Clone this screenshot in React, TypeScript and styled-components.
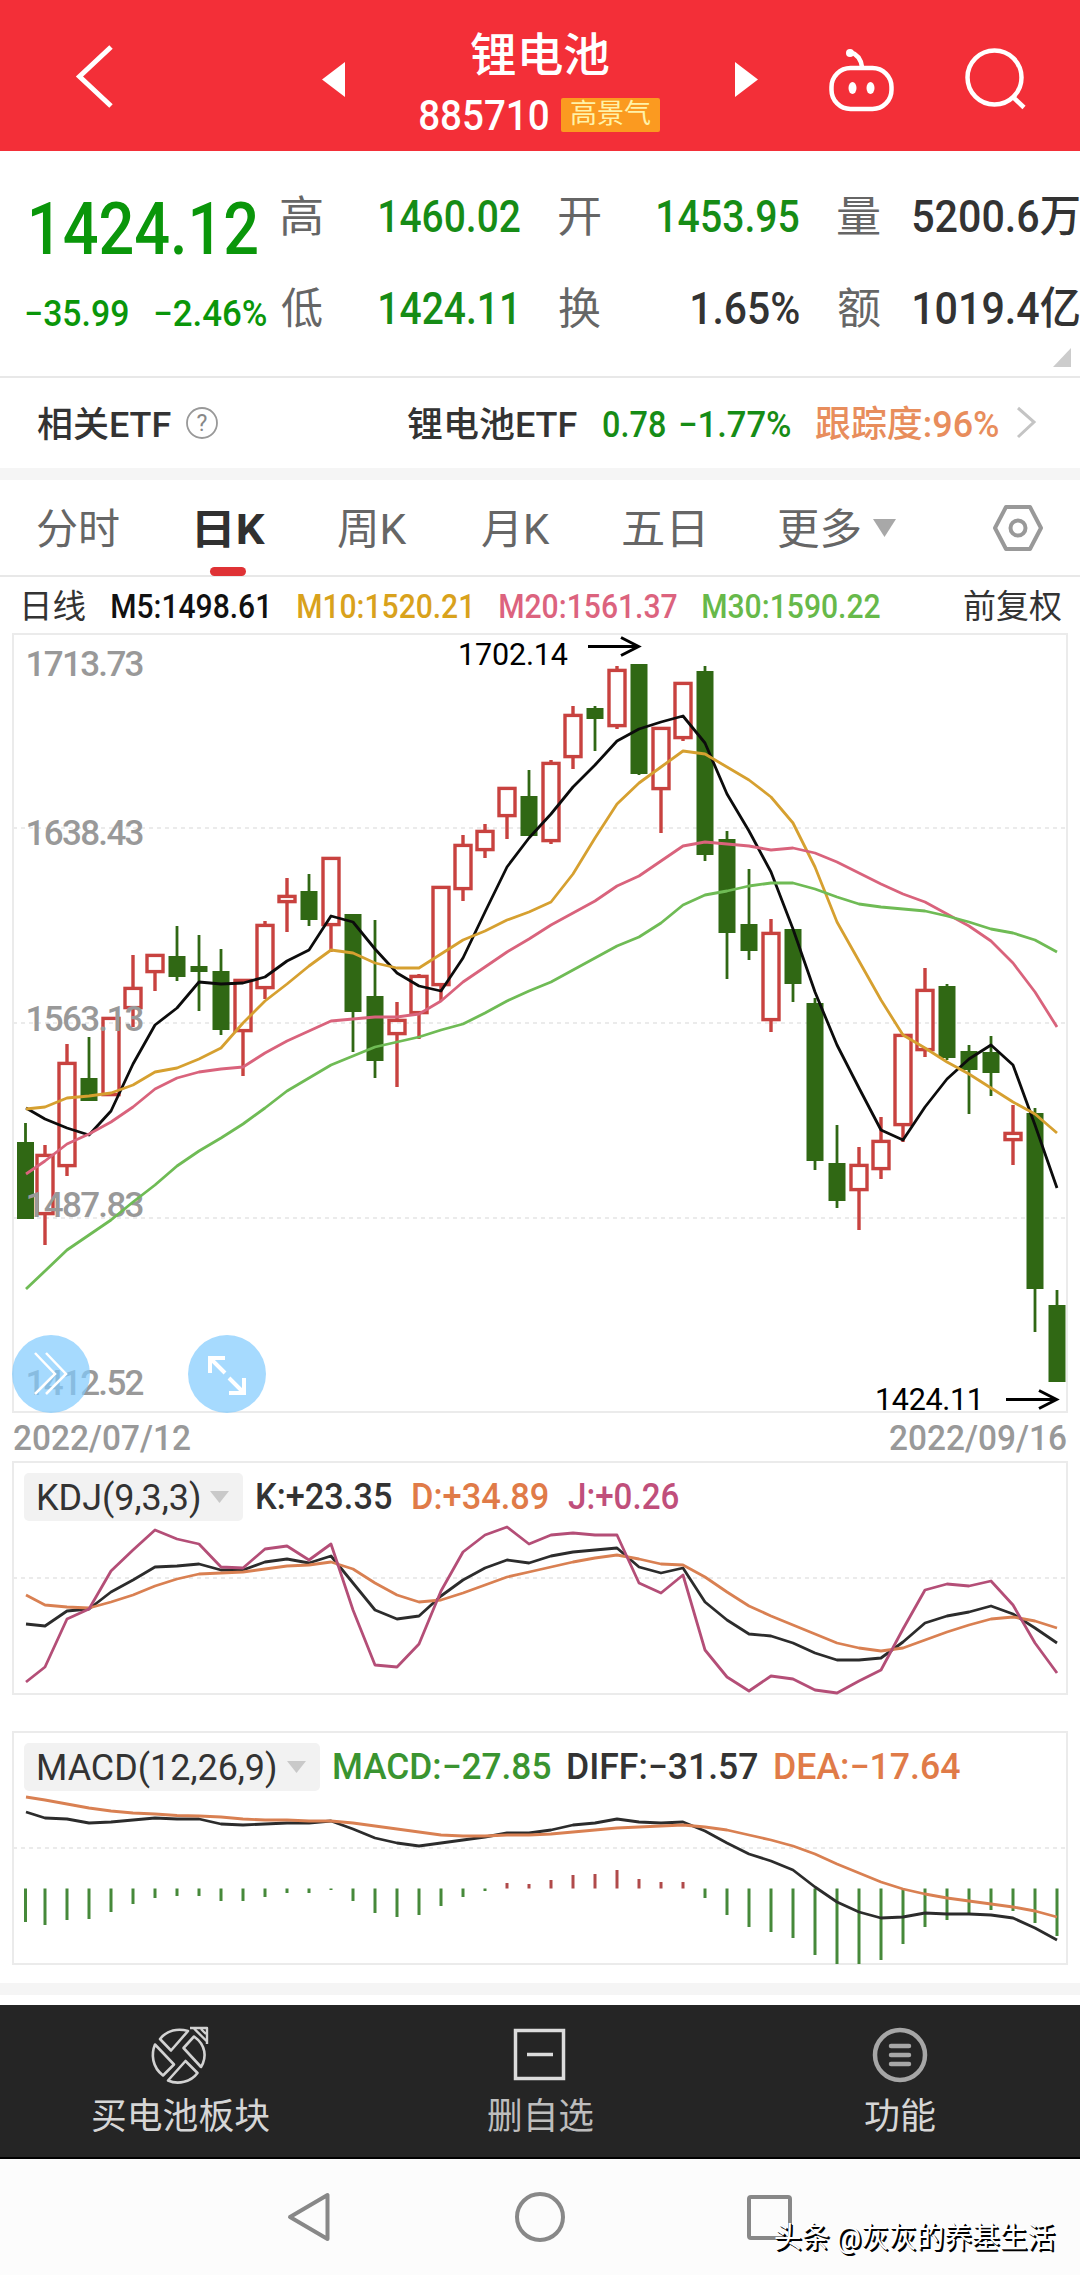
import React, { useLayoutEffect, useRef } from "react";
import styled, { createGlobalStyle } from "styled-components";

const FONT = `Roboto, "Noto Sans CJK SC", sans-serif`;

const Global = createGlobalStyle`
  * { box-sizing: border-box; }
  html, body { margin: 0; padding: 0; background: #fff; }
  body { font-family: ${FONT}; color: #333; width: 1080px; }
  svg { display: block; flex: none; overflow: visible; }
`;

/* ---------- text fitted to a fixed ink width ---------- */

const FitBox = styled.span<{ $w: number; $size: number; $ml: number; $mr: number; $color?: string; $weight: number; $dy: number; $shadow?: string }>`
  display: block;
  flex: none;
  width: ${(p) => p.$w}px;
  height: ${(p) => p.$size}px;
  margin-left: ${(p) => p.$ml}px;
  margin-right: ${(p) => p.$mr}px;
  margin-top: ${(p) => p.$dy}px;
  font-size: ${(p) => p.$size}px;
  font-weight: ${(p) => p.$weight};
  line-height: 1;
  white-space: nowrap;
  color: ${(p) => p.$color || "inherit"};
  text-shadow: ${(p) => p.$shadow || "none"};
`;
const FitInner = styled.span`
  display: inline-block;
  transform-origin: 0 50%;
`;

interface FitProps {
  children: string;
  w: number;
  size: number;
  ml?: number;
  mr?: number;
  dy?: number;
  color?: string;
  weight?: number;
  shadow?: string;
}

function Fit({ children, w, size, ml = 0, mr = 0, dy = 0, color, weight = 500, shadow }: FitProps) {
  const ref = useRef<HTMLSpanElement>(null);
  useLayoutEffect(() => {
    const ctx = document.createElement("canvas").getContext("2d");
    if (!ctx || !ref.current) return;
    ctx.font = `${weight} ${size}px ${FONT}`;
    const m = ctx.measureText(children);
    const scale = w / (m.actualBoundingBoxLeft + m.actualBoundingBoxRight);
    ref.current.style.transform = `translateX(${m.actualBoundingBoxLeft * scale}px) scaleX(${scale})`;
  });
  return (
    <FitBox $w={w} $size={size} $ml={ml} $mr={mr} $dy={dy} $color={color} $weight={weight} $shadow={shadow}>
      <FitInner ref={ref}>{children}</FitInner>
    </FitBox>
  );
}

/* ---------- header ---------- */

const Header = styled.header`
  display: flex;
  align-items: flex-start;
  height: 151px;
  background: #f32f38;
  color: #fff;
`;
const HeaderIcon = styled.div<{ $w: number }>`
  width: ${(p) => p.$w}px;
  height: 151px;
  flex: none;
`;
const TitleBlock = styled.div`
  width: 390px;
  height: 151px;
  display: flex;
  flex-direction: column;
  align-items: center;
  padding-top: 32px;
`;
const CodeRow = styled.div`
  display: flex;
  align-items: center;
  margin-top: 17px;
`;
const Badge = styled.div`
  display: flex;
  align-items: center;
  width: 99px;
  height: 34px;
  margin: -3px 0 0 13px;
  background: #fb9a20;
  border-radius: 2px;
`;

/* ---------- quote ---------- */

const Quote = styled.section`
  display: flex;
  height: 227px;
  border-bottom: 2px solid #e8e8e8;
`;
const PriceCol = styled.div`
  width: 281px;
  padding-top: 42px;
  color: #0a960a;
`;
const Row = styled.div<{ $mt?: number; $h?: number; $pl?: number }>`
  display: flex;
  align-items: center;
  margin-top: ${(p) => p.$mt || 0}px;
  padding-left: ${(p) => p.$pl || 0}px;
  height: ${(p) => (p.$h ? p.$h + "px" : "auto")};
`;
const Stats = styled.div`
  display: grid;
  grid-template-columns: 239px 240px 241px;
  grid-template-rows: 92px 92px;
  column-gap: 39px;
  padding-top: 20px;
`;
const Stat = styled.div`
  display: flex;
  align-items: center;
  justify-content: space-between;
`;
const Corner = styled.svg`
  align-self: flex-end;
  margin: 0 0 9px -26px;
`;

const EtfRow = styled.section`
  display: flex;
  align-items: center;
  height: 90px;
  padding: 4px 0 0 37px;
`;
const Help = styled.svg`
  margin: -5px 0 0 14px;
`;
const Chevron = styled.svg`
  margin: -5px 0 0 18px;
`;
const Band = styled.div<{ $h: number }>`
  height: ${(p) => p.$h}px;
  background: #f5f5f5;
`;

/* ---------- tabs ---------- */

const Tabs = styled.nav`
  display: flex;
  align-items: flex-start;
  height: 97px;
  padding: 29px 0 0 37px;
  border-bottom: 2px solid #e8e8e8;
  color: #666;
`;
const ActiveTab = styled.div`
  display: flex;
  flex-direction: column;
  align-items: center;
  width: 68px;
  height: 67px;
  margin-left: 78px;
  color: #303030;
  &::after {
    content: "";
    flex: none;
    width: 36px;
    height: 9px;
    margin: 16px 6px 0 0;
    border-radius: 5px;
    background: #df3235;
  }
`;

const MaRow = styled.div`
  display: flex;
  align-items: center;
  height: 56px;
  padding: 3px 0 0 24px;
`;

/* ---------- panels ---------- */

const Panel = styled.section<{ $h: number; $mb: number }>`
  position: relative;
  width: 1080px;
  height: ${(p) => p.$h}px;
  margin-bottom: ${(p) => p.$mb}px;
`;
const Legend = styled.div`
  position: absolute;
  left: 24px;
  top: 12px;
  height: 48px;
  display: flex;
  align-items: center;
`;
const Chip = styled.div<{ $w: number }>`
  display: flex;
  align-items: center;
  width: ${(p) => p.$w}px;
  height: 48px;
  padding-left: 14px;
  background: #f2f2f2;
  border-radius: 5px;
`;
const Dates = styled.div`
  display: flex;
  justify-content: space-between;
  align-items: center;
  height: 48px;
  padding: 2px 14px 0;
  color: #999;
`;
const Round = styled.div<{ $x: number }>`
  position: absolute;
  left: ${(p) => p.$x}px;
  top: 702px;
  width: 78px;
  height: 78px;
  border-radius: 50%;
  background: rgba(128, 202, 254, 0.7);
`;

/* ---------- bottom ---------- */

const ToolBar = styled.footer`
  display: grid;
  grid-template-columns: 1fr 1fr 1fr;
  height: 154px;
  margin-top: 10px;
  background: #252525;
  border-bottom: 2px solid #000;
`;
const Tool = styled.div`
  display: flex;
  flex-direction: column;
  align-items: center;
  padding-top: 10px;
`;
const SysNav = styled.div`
  position: relative;
  height: 116px;
  background: #fcfcfc;
`;
const Watermark = styled.div`
  position: absolute;
  left: 775px;
  top: 65px;
`;

/* ---------- data ---------- */

const X = (i: number) => (i === 0 ? 25.5 : 45 + 22 * (i - 1));

// direction, body top, body bottom, wick top, wick bottom
const candles: [string, number, number, number, number][] = [
  ["g", 1142, 1219, 1123, 1219], ["r", 1154, 1215, 1145, 1245], ["r", 1062, 1167, 1044, 1176], ["g", 1078, 1101, 1037, 1101],
  ["r", 1017, 1096, 1017, 1096], ["r", 987, 1009, 955, 1027], ["r", 954, 973, 954, 991], ["g", 956, 977, 926, 981],
  ["g", 966, 972, 935, 1011], ["g", 971, 1030, 949, 1035], ["r", 979, 1032, 979, 1076], ["r", 924, 989, 921, 999],
  ["r", 895, 903, 878, 932], ["g", 891, 920, 874, 926], ["r", 857, 926, 857, 952], ["g", 914, 1012, 914, 1052],
  ["g", 996, 1061, 920, 1078], ["r", 1019, 1035, 1002, 1087], ["r", 975, 1014, 974, 1039], ["r", 886, 986, 886, 1001],
  ["r", 844, 890, 835, 901], ["r", 830, 851, 824, 858], ["r", 787, 817, 787, 839], ["g", 796, 836, 770, 836],
  ["r", 762, 842, 760, 844], ["r", 714, 758, 706, 769], ["g", 708, 719, 706, 751], ["r", 669, 727, 666, 729],
  ["g", 664, 774, 664, 775], ["r", 727, 790, 727, 833], ["r", 682, 739, 682, 741], ["g", 671, 855, 666, 861],
  ["g", 839, 933, 831, 979], ["g", 924, 951, 869, 960], ["r", 932, 1021, 919, 1032], ["g", 929, 984, 929, 1002],
  ["g", 1003, 1161, 998, 1170], ["g", 1163, 1201, 1125, 1208], ["r", 1164, 1191, 1147, 1230], ["r", 1140, 1170, 1117, 1179],
  ["r", 1034, 1126, 1034, 1142], ["r", 989, 1051, 968, 1057], ["g", 986, 1058, 984, 1060], ["g", 1051, 1070, 1045, 1114],
  ["g", 1052, 1073, 1036, 1096], ["r", 1132, 1141, 1105, 1165], ["g", 1113, 1289, 1108, 1332], ["g", 1305, 1382, 1290, 1382],
];
const ma5 = [1108, 1119, 1128, 1135, 1111, 1064, 1025, 1008, 982, 984, 983, 977, 961, 950, 916, 922, 949, 973, 986, 991, 958, 912, 867, 838, 814, 787, 765, 741, 729, 722, 716, 743, 794, 831, 872, 929, 992, 1045, 1088, 1130, 1140, 1107, 1079, 1059, 1045, 1065, 1125, 1188];
const ma10 = [1109, 1107, 1098, 1096, 1093, 1085, 1072, 1068, 1059, 1048, 1023, 1001, 984, 966, 950, 953, 963, 968, 968, 954, 940, 931, 920, 912, 902, 874, 838, 804, 783, 767, 751, 754, 767, 780, 797, 823, 867, 922, 961, 1000, 1035, 1048, 1062, 1074, 1088, 1102, 1114, 1133];
const ma20 = [1174, 1161, 1144, 1134, 1122, 1107, 1089, 1078, 1072, 1069, 1067, 1053, 1041, 1031, 1021, 1019, 1017, 1017, 1014, 1001, 982, 967, 952, 939, 925, 913, 901, 886, 876, 861, 846, 842, 844, 846, 850, 848, 853, 862, 873, 884, 894, 902, 914, 926, 941, 963, 992, 1027];
const ma30 = [1289, 1271, 1250, 1235, 1220, 1202, 1185, 1166, 1151, 1138, 1124, 1108, 1091, 1078, 1065, 1056, 1047, 1042, 1037, 1030, 1024, 1013, 1001, 991, 982, 970, 958, 946, 937, 923, 905, 895, 891, 886, 883, 883, 889, 897, 904, 907, 909, 911, 916, 922, 929, 933, 940, 952];
const kLine = [1624, 1626, 1611, 1609, 1592, 1580, 1567, 1566, 1564, 1570, 1570, 1562, 1559, 1563, 1556, 1583, 1610, 1619, 1616, 1596, 1580, 1568, 1560, 1563, 1556, 1552, 1550, 1548, 1567, 1573, 1568, 1602, 1620, 1634, 1636, 1643, 1653, 1660, 1660, 1658, 1642, 1623, 1616, 1612, 1606, 1614, 1628, 1643];
const dLine = [1595, 1605, 1607, 1608, 1602, 1595, 1586, 1579, 1574, 1573, 1572, 1569, 1566, 1565, 1562, 1569, 1583, 1595, 1602, 1600, 1593, 1585, 1577, 1572, 1567, 1562, 1558, 1555, 1559, 1564, 1565, 1577, 1592, 1606, 1616, 1625, 1634, 1643, 1648, 1651, 1648, 1640, 1632, 1625, 1619, 1617, 1621, 1628];
const jLine = [1682, 1667, 1619, 1609, 1571, 1550, 1530, 1539, 1544, 1567, 1568, 1549, 1546, 1560, 1544, 1610, 1665, 1667, 1644, 1591, 1552, 1535, 1527, 1544, 1535, 1533, 1535, 1535, 1583, 1593, 1575, 1650, 1677, 1691, 1676, 1679, 1690, 1693, 1681, 1670, 1629, 1590, 1584, 1586, 1581, 1605, 1643, 1673];
const diff = [1812, 1818, 1819, 1823, 1822, 1820, 1818, 1819, 1819, 1824, 1825, 1824, 1823, 1823, 1821, 1829, 1838, 1843, 1846, 1843, 1840, 1837, 1833, 1833, 1830, 1825, 1823, 1819, 1822, 1823, 1822, 1831, 1843, 1854, 1861, 1870, 1887, 1902, 1912, 1918, 1917, 1913, 1914, 1914, 1915, 1918, 1928, 1940];
const dea = [1797, 1800, 1804, 1808, 1811, 1813, 1814, 1815.5, 1816, 1817, 1819, 1820, 1820, 1821, 1821, 1823, 1826, 1829, 1832, 1835, 1836, 1836, 1835, 1835, 1834, 1832, 1830, 1828, 1827, 1826, 1825, 1827, 1830, 1835, 1840, 1846, 1854, 1864, 1873, 1882, 1889, 1894, 1898, 1901, 1904, 1907, 1911, 1917];
const bars = [1922, 1925, 1920, 1919, 1912, 1904, 1898, 1896, 1896, 1901, 1901, 1897, 1893, 1893, 1890, 1901, 1913, 1917, 1915, 1906, 1897, 1891, 1883, 1884, 1880, 1875, 1874, 1870, 1879, 1882, 1882, 1898, 1915, 1927, 1932, 1938, 1955, 1964, 1964, 1960, 1944, 1927, 1920, 1914, 1910, 1911, 1923, 1936];

const yLabels: [string, number][] = [["1713.73", 676], ["1638.43", 845], ["1563.13", 1031], ["1487.83", 1217], ["1412.52", 1395]];

function Line({ ys, color, w = 2.8 }: { ys: number[]; color: string; w?: number }) {
  const pts = ys.map((y, i) => `${i === 0 ? 26 : X(i)},${y}`).join(" ");
  return <polyline points={pts} fill="none" stroke={color} strokeWidth={w} strokeLinejoin="round" />;
}

function Frame({ top, bottom, grid }: { top: number; bottom: number; grid: number[] }) {
  return (
    <g fill="none" stroke="#ebebeb" strokeWidth={2}>
      <rect x={13} y={top} width={1054} height={bottom - top} />
      {grid.map((y) => (
        <line key={y} x1={13} x2={1067} y1={y} y2={y} strokeDasharray="4 4" />
      ))}
    </g>
  );
}

function KChart() {
  return (
    <svg width={1080} height={780} viewBox="0 633 1080 780">
      <Frame top={634} bottom={1412} grid={[828, 1023, 1218]} />
      {candles.map(([d, t, b, wt, wb], i) => {
        const x = X(i);
        return d === "g" ? (
          <g key={i} fill="#306814">
            <rect x={x - 1.4} y={wt} width={2.8} height={wb - wt} />
            <rect x={x - 8.5} y={t} width={17} height={b - t} />
          </g>
        ) : (
          <g key={i} stroke="#c8423f" fill="none" strokeWidth={3.4}>
            <path d={`M${x} ${wt}V${t + 1}M${x} ${b - 1}V${wb}`} />
            <rect x={x - 8} y={t + 1.4} width={16} height={b - t - 2.8} />
          </g>
        );
      })}
      <g fill="#999" fontSize={35} fontWeight={500}>
        {yLabels.map(([s, y]) => (
          <text key={s} x={25.5} y={y} textLength={119} lengthAdjust="spacing">{s}</text>
        ))}
      </g>
      <Line ys={ma5} color="#0c0c0c" />
      <Line ys={ma10} color="#d6a030" />
      <Line ys={ma20} color="#d9637c" />
      <Line ys={ma30} color="#6fbb55" />
      <g fill="#000" fontSize={30.5}>
        <text x={458} y={665} textLength={110}>1702.14</text>
        <text x={875} y={1409.5} textLength={109}>1424.11</text>
      </g>
      <g fill="none" stroke="#000" strokeWidth={3}>
        <path d="M588 646.5H638M621 637.5L638.5 646.5L621 655.5" />
        <path d="M1006 1399.5H1056M1039 1390.5L1056.5 1399.5L1039 1408.5" />
      </g>
    </svg>
  );
}

const CaretSvg = styled.svg<{ $ml: number }>`
  margin-left: ${(p) => p.$ml}px;
`;
const Caret = ({ ml }: { ml: number }) => (
  <CaretSvg $ml={ml} width={19} height={12}>
    <path d="M0 0H19L9.5 12Z" fill="#c9c9c9" />
  </CaretSvg>
);
const MoreArrow = styled.svg`
  margin: 10px 0 0 13px;
`;
const Settings = styled.svg`
  margin: -5px 0 0 95px;
`;

export default function App() {
  const green = "#168c16";
  return (
    <>
      <Global />
      <Header>
        <HeaderIcon $w={345}>
          <svg width={345} height={151} fill="none">
            <path d="M111 47L79.500 76.500L111 106" stroke="#fff" strokeWidth={5} />
            <path d="M322 79.500L345 62V97Z" fill="#fff" />
          </svg>
        </HeaderIcon>
        <TitleBlock>
          <Fit w={138} size={46}>锂电池</Fit>
          <CodeRow>
            <Fit w={128} size={42}>885710</Fit>
            <Badge><Fit w={79} size={27} weight={400} ml={10} color="#fff2a8">高景气</Fit></Badge>
          </CodeRow>
        </TitleBlock>
        <HeaderIcon $w={345}>
          <svg width={345} height={151} viewBox="735 0 345 151" fill="none">
            <path d="M735 62L758 79.500L735 97Z" fill="#fff" />
            <g stroke="#fff" strokeWidth={4.5}>
              <rect x={831.500} y={68} width={60} height={41} rx={19} />
              <path d="M850 52C857 54 861 59 862 67" />
              <circle cx={994.500} cy={77.500} r={27} />
              <path d="M1013 97L1024 107.500" />
            </g>
            <circle cx={850} cy={53} r={4} fill="#fff" />
            <ellipse cx={852.500} cy={88} rx={4} ry={6} fill="#fff" />
            <ellipse cx={870.500} cy={88} rx={4} ry={6} fill="#fff" />
          </svg>
        </HeaderIcon>
      </Header>

      <Quote>
        <PriceCol>
          <Row $pl={32}><Fit w={225} size={73}>1424.12</Fit></Row>
          <Row $pl={26} $mt={30}>
            <Fit w={102} size={36}>−35.99</Fit>
            <Fit w={111} size={36} ml={27}>−2.46%</Fit>
          </Row>
        </PriceCol>
        <Stats>
          <Stat><Fit w={41} size={43} weight={400} color="#666">高</Fit><Fit w={140} size={44} color={green}>1460.02</Fit></Stat>
          <Stat><Fit w={41} size={43} weight={400} color="#666">开</Fit><Fit w={141} size={44} color={green}>1453.95</Fit></Stat>
          <Stat><Fit w={42} size={43} weight={400} color="#666">量</Fit><Fit w={166} size={44}>5200.6万</Fit></Stat>
          <Stat><Fit w={41} size={43} weight={400} color="#666">低</Fit><Fit w={134} size={44} mr={6} color={green}>1424.11</Fit></Stat>
          <Stat><Fit w={41} size={43} weight={400} color="#666">换</Fit><Fit w={107} size={44}>1.65%</Fit></Stat>
          <Stat><Fit w={42} size={43} weight={400} color="#666">额</Fit><Fit w={165} size={44}>1019.4亿</Fit></Stat>
        </Stats>
        <Corner width={18} height={19}><path d="M18 0V19H0Z" fill="#ccc" /></Corner>
      </Quote>

      <EtfRow>
        <Fit w={134} size={35}>相关ETF</Fit>
        <Help width={34} height={34}>
          <circle cx={17} cy={17} r={15} fill="none" stroke="#999" strokeWidth={1.800} />
          <text x={17} y={25} fontSize={23} textAnchor="middle" fill="#888">?</text>
        </Help>
        <Fit w={170} size={35} ml={188}>锂电池ETF</Fit>
        <Fit w={62} size={36} ml={26} color={green}>0.78</Fit>
        <Fit w={110} size={36} ml={15} color={green}>−1.77%</Fit>
        <Fit w={182} size={36} ml={26} color="#e88d5c">跟踪度:96%</Fit>
        <Chevron width={21} height={34} fill="none"><path d="M2 2L18 16L2 31" stroke="#c4c4c4" strokeWidth={3} /></Chevron>
      </EtfRow>
      <Band $h={12} />

      <Tabs>
        <Fit w={82} size={42} weight={400}>分时</Fit>
        <ActiveTab><Fit w={68} size={42} weight={700}>日K</Fit></ActiveTab>
        <Fit w={69} size={42} ml={73} weight={400}>周K</Fit>
        <Fit w={68} size={42} ml={75} weight={400}>月K</Fit>
        <Fit w={79} size={42} ml={73} weight={400}>五日</Fit>
        <Fit w={82} size={42} ml={76} weight={400}>更多</Fit>
        <MoreArrow width={24} height={18}><path d="M0 0H23L11.500 18Z" fill="#a8a8a8" /></MoreArrow>
        <Settings width={52} height={48} viewBox="0 0 52 48" fill="none" stroke="#999" strokeWidth={4} strokeLinejoin="round">
          <path d="M14 3H38L49 24L38 45H14L3 24Z" />
          <circle cx={26} cy={24} r={7.500} />
        </Settings>
      </Tabs>

      <MaRow>
        <Fit w={61} size={33} weight={400}>日线</Fit>
        <Fit w={155} size={33} mr={4} ml={27} color="#111">M5:1498.61</Fit>
        <Fit w={172} size={33} mr={3} ml={27} color="#d9a21c">M10:1520.21</Fit>
        <Fit w={177} size={33} ml={27} color="#dc637e">M20:1561.37</Fit>
        <Fit w={177} size={33} ml={26} color="#67b94a">M30:1590.22</Fit>
        <Fit w={97} size={33} ml={84} weight={400}>前复权</Fit>
      </MaRow>

      <Panel $h={780} $mb={0}>
        <KChart />
        <Round $x={12}>
          <svg width={78} height={78} fill="none" stroke="#fff" strokeWidth={2.500}>
            <path d="M23 18L43 39L23 59M34 18L54 39L34 59" />
          </svg>
        </Round>
        <Round $x={188}>
          <svg width={78} height={78} fill="none" stroke="#fff" strokeWidth={4}>
            <path d="M37 23H22V38M22 23L37 38M41 58H56V43M41 43L56 58" />
          </svg>
        </Round>
      </Panel>
      <Dates>
        <Fit w={176} size={35}>2022/07/12</Fit>
        <Fit w={176} size={35}>2022/09/16</Fit>
      </Dates>

      <Panel $h={234} $mb={36}>
        <svg width={1080} height={234} viewBox="0 1461 1080 234">
          <Frame top={1462} bottom={1694} grid={[1578]} />
          <Line ys={kLine} color="#2c2c2c" />
          <Line ys={dLine} color="#d98052" />
          <Line ys={jLine} color="#b44e77" />
        </svg>
        <Legend>
          <Chip $w={219}><Fit w={161} size={36} weight={400} dy={2}>KDJ(9,3,3)</Fit><Caret ml={11} /></Chip>
          <Fit w={134} size={36} ml={14}>K:+23.35</Fit>
          <Fit w={135} size={36} ml={22} color="#e07b48">D:+34.89</Fit>
          <Fit w={110} size={36} ml={20} color="#c04f7b">J:+0.26</Fit>
        </Legend>
      </Panel>

      <Panel $h={234} $mb={18}>
        <svg width={1080} height={234} viewBox="0 1731 1080 234">
          <Frame top={1732} bottom={1964} grid={[1848]} />
          {bars.map((y, i) => (
            <rect key={i} x={X(i) - 1.5} width={3} y={y < 1888 ? y : 1888.5} height={Math.abs(y - 1888.5)} fill={y < 1888 ? "#b04a4a" : "#46893a"} />
          ))}
          <Line ys={diff} color="#2c2c2c" />
          <Line ys={dea} color="#d98052" />
        </svg>
        <Legend>
          <Chip $w={296}><Fit w={237} size={36} weight={400} dy={2}>MACD(12,26,9)</Fit><Caret ml={12} /></Chip>
          <Fit w={216} size={36} ml={14} color="#3a9430">MACD:−27.85</Fit>
          <Fit w={189} size={36} ml={18}>DIFF:−31.57</Fit>
          <Fit w={185} size={36} ml={18} color="#e07b48">DEA:−17.64</Fit>
        </Legend>
      </Panel>
      <Band $h={12} />

      <ToolBar>
        <Tool>
          <svg width={80} height={80} fill="none" stroke="#d2d2d2" strokeWidth={2.600} strokeLinejoin="round">
            <path d="M20 24C27 15 38 13 48 16L31 35.500Z" />
            <path d="M54 21.500C66 30 67 42 61 52L43.500 33Z" />
            <path d="M45.500 46L57.500 58C51 67 38 70 28 65.500Z" />
            <path d="M15 29.500L34 49.500L23 60.500C12 52 11 39 15 29.500Z" />
            <path d="M50 13H67V29M54 13.500L66.500 26M61 14L66 19" strokeWidth={2.400} />
          </svg>
          <Fit w={177} size={36} weight={400} dy={4} color="#d6d6d6">买电池板块</Fit>
        </Tool>
        <Tool>
          <svg width={80} height={80} fill="none" stroke="#dcdcdc" strokeWidth={3.500}>
            <rect x={15.500} y={15.500} width={48} height={48} />
            <path d="M27 39.500H53" />
          </svg>
          <Fit w={105} size={36} weight={400} dy={4} color="#bdbdbd">删自选</Fit>
        </Tool>
        <Tool>
          <svg width={80} height={80} fill="none" stroke="#a6a6a6" strokeWidth={4.500}>
            <circle cx={40} cy={40} r={25} />
            <path d="M31 31H49M31 40H49M31 49H49" strokeLinecap="round" />
          </svg>
          <Fit w={70} size={36} weight={400} dy={4} color="#d6d6d6">功能</Fit>
        </Tool>
      </ToolBar>

      <SysNav>
        <svg width={1080} height={116} viewBox="0 2159 1080 116" fill="none" stroke="#888" strokeWidth={4} strokeLinejoin="round">
          <path d="M327.500 2195V2239L290 2217Z" />
          <circle cx={540} cy={2217} r={23} />
          <rect x={749} y={2197} width={41} height={41} rx={2} />
        </svg>
        <Watermark>
          <Fit w={279} size={29} color="#fff" weight={400} shadow="1px 1px 0 #000, 2px 2px 0 #000">头条 @灰灰的养基生活</Fit>
        </Watermark>
      </SysNav>
    </>
  );
}
